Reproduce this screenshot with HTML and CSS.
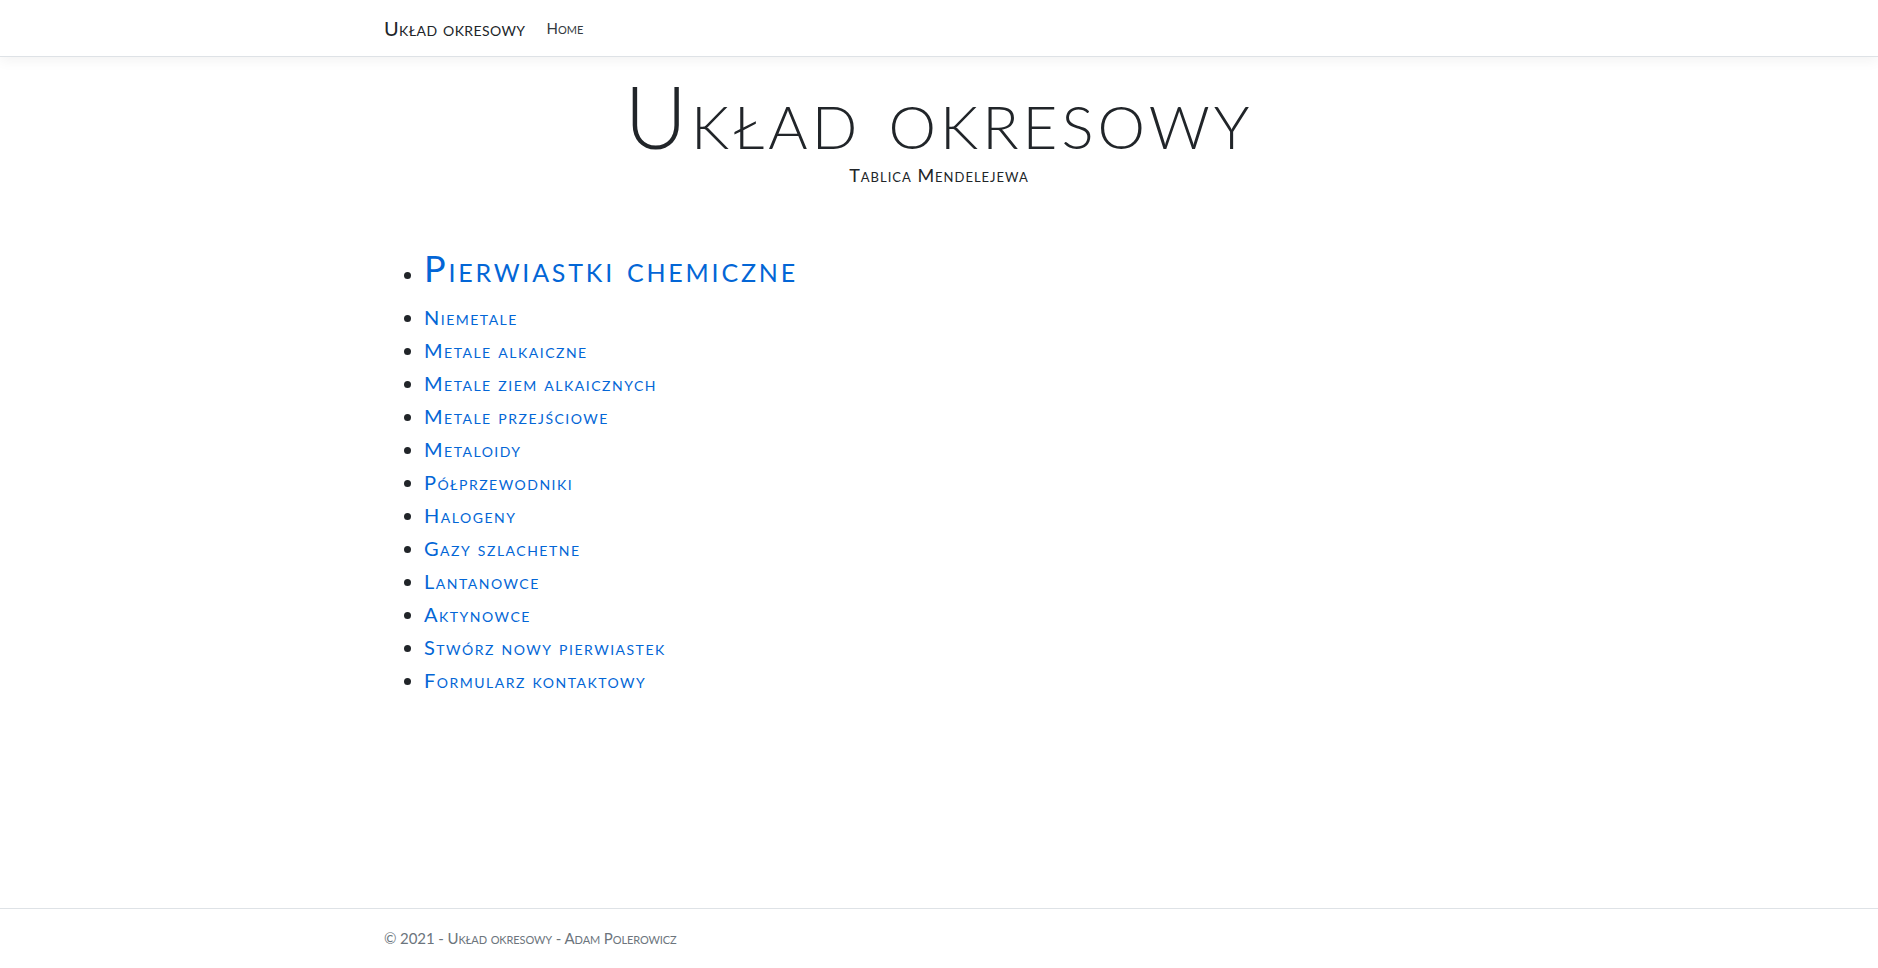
FILE: index.html
```html
<!DOCTYPE html>
<html lang="pl">
<head>
<meta charset="utf-8">
<title>Układ okresowy</title>
<link rel="stylesheet" href="styles.css">
</head>
<body>
<header class="navbar">
  <div class="container nav-inner">
    <a class="brand" href="#">Układ okresowy</a>
    <a class="nav-link" href="#">Home</a>
  </div>
</header>
<main class="main">
  <div class="container">
    <div class="hero">
      <h1 class="title">Układ okresowy</h1>
      <p class="subtitle">Tablica Mendelejewa</p>
    </div>
    <ul class="menu">
      <li class="menu-head"><a href="#">Pierwiastki chemiczne</a></li>
      <li><a href="#">Niemetale</a></li>
      <li><a href="#">Metale alkaiczne</a></li>
      <li><a href="#">Metale ziem alkaicznych</a></li>
      <li><a href="#">Metale przejściowe</a></li>
      <li><a href="#">Metaloidy</a></li>
      <li><a href="#">Półprzewodniki</a></li>
      <li><a href="#">Halogeny</a></li>
      <li><a href="#">Gazy szlachetne</a></li>
      <li><a href="#">Lantanowce</a></li>
      <li><a href="#">Aktynowce</a></li>
      <li><a href="#">Stwórz nowy pierwiastek</a></li>
      <li><a href="#">Formularz kontaktowy</a></li>
    </ul>
  </div>
</main>
<footer class="footer">
  <div class="container">© 2021 - Układ okresowy - Adam Polerowicz</div>
</footer>
</body>
</html>
```
FILE: styles.css
```css
* { box-sizing: border-box; }
html, body { margin: 0; height: 100%; }
body {
  display: flex;
  flex-direction: column;
  min-height: 100vh;
  font-family: Lato, "Noto Sans", sans-serif;
  font-variant: small-caps;
  color: #212529;
  background: #fff;
}
a { text-decoration: none; }
.container {
  width: 1140px;
  margin: 0 auto;
  padding: 0 15px;
}
.navbar {
  height: 57px;
  border-bottom: 1px solid #dee2e6;
  box-shadow: 0 4px 12px rgba(0,0,0,0.05);
  background: #fff;
  position: relative;
  z-index: 1;
}
.nav-inner {
  display: flex;
  align-items: center;
  height: 56px;
}
.brand {
  color: #212529;
  font-size: 20px;
  letter-spacing: 0.4px;
  margin-right: 21px;
}
.nav-link {
  color: #343a40;
  font-size: 15px;
}
.main { flex: 1; }
.hero { text-align: center; padding-top: 12px; }
.title {
  margin: 0;
  font-size: 86px;
  font-weight: 300;
  line-height: 1.1;
  letter-spacing: 4px;
}
.subtitle {
  margin: 0;
  font-size: 18px;
  letter-spacing: 1px;
}
.menu {
  margin: 49px 0 0;
  padding-left: 40px;
}
.menu li {
  font-size: 20px;
  line-height: 33px;
  letter-spacing: 1.5px;
}
.menu li.menu-head {
  font-size: 36px;
  line-height: 66px;
  letter-spacing: 2.8px;
}
.menu li.menu-head::marker {
  font-size: 20px;
}
.menu a { color: #0366d6; }
.footer {
  border-top: 1px solid #dee2e6;
  height: 60px;
  line-height: 58px;
  color: #6c757d;
  font-size: 15px;
  letter-spacing: -0.1px;
}
```
